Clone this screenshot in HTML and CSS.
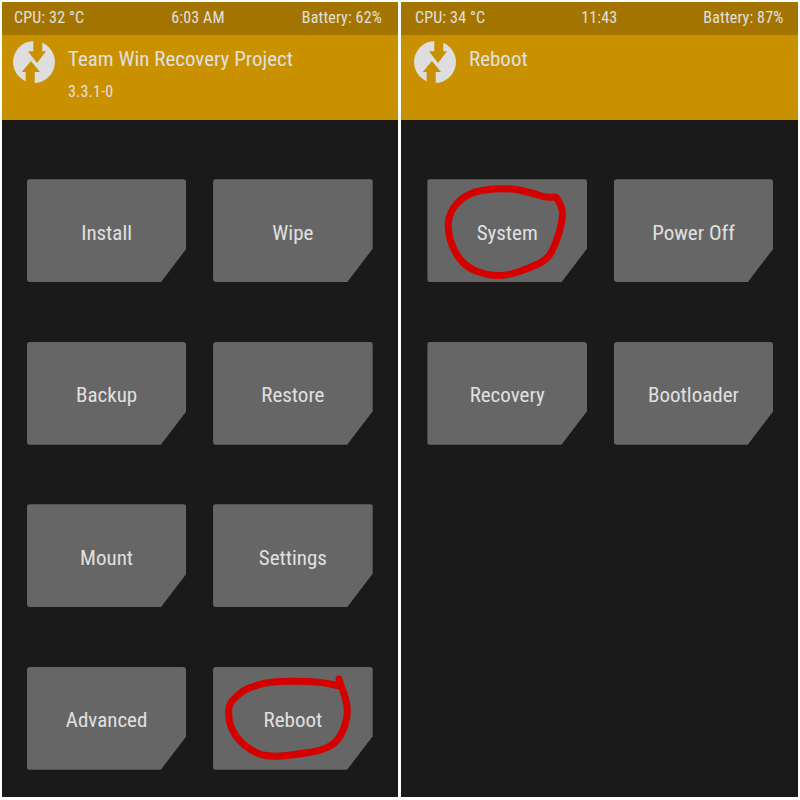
FILE: index.html
```html
<!DOCTYPE html>
<html lang="en">
<head>
    <meta charset="UTF-8">
    <title>TWRP Reboot</title>
    <link rel="stylesheet" href="styles.css">
</head>
<body>
    <div class="screens">
        <section class="screen screen-main">
            <div class="status">
                <span>CPU: 32 °C</span>
                <span>6:03 AM</span>
                <span class="battery">Battery: 62%</span>
            </div>
            <header class="title-bar">
                <svg class="logo" viewBox="0 0 42 42">
                    <circle cx="21" cy="21" r="21" fill="#dedede"/>
                    <path fill="#c99000" d="M20.3 0H29.3V10.3H33L24 22L15 10.3H20.3Z"/>
                    <path fill="#c99000" d="M12.7 42H21.7V31H27L18 20L8.7 31H12.7Z"/>
                </svg>
                <div>
                    <h1>Team Win Recovery Project</h1>
                    <p class="version">3.3.1-0</p>
                </div>
            </header>
            <div class="menu">
                <button class="tile">Install</button>
                <button class="tile">Wipe</button>
                <button class="tile">Backup</button>
                <button class="tile">Restore</button>
                <button class="tile">Mount</button>
                <button class="tile">Settings</button>
                <button class="tile">Advanced</button>
                <button class="tile">
                    Reboot
                    <svg class="scribble" viewBox="0 0 160 103">
                        <path d="M127 18Q110 14 95 13.5Q80 13 67 13.5Q54 14 45 17Q37 19 30 23Q24 27.5 19.5 32.5Q15 37.5 15.8 46.5Q16 56 20 63Q24 71 32 77.5Q40 84 50 87Q60 89 73.5 87.5Q87 86 99 84Q110 82 117 78Q124 74 128 66.5Q132 59 133.5 51Q135 42.5 133.5 35Q132 27.5 129 20Q126 12 126 11"/>
                    </svg>
                </button>
            </div>
        </section>
        <section class="screen screen-reboot">
            <div class="status">
                <span>CPU: 34 °C</span>
                <span>11:43</span>
                <span class="battery">Battery: 87%</span>
            </div>
            <header class="title-bar">
                <svg class="logo" viewBox="0 0 42 42">
                    <circle cx="21" cy="21" r="21" fill="#dedede"/>
                    <path fill="#c99000" d="M20.3 0H29.3V10.3H33L24 22L15 10.3H20.3Z"/>
                    <path fill="#c99000" d="M12.7 42H21.7V31H27L18 20L8.7 31H12.7Z"/>
                </svg>
                <div>
                    <h1>Reboot</h1>
                </div>
            </header>
            <div class="menu">
                <button class="tile">
                    System
                    <svg class="scribble" viewBox="0 0 160 103">
                        <path d="M129 17Q119 18 112.5 15.5Q106 13 94 10.5Q82.5 8 67.5 9Q52.5 10 44 13.5Q36 17 30 23.5Q24 30 22 38.5Q20 47 23 58.5Q26 70 32.5 78.5Q39 87 49 91Q59 95 69 95.5Q79 96 91 92Q102.5 88 112 83.5Q121 79 125 71Q129 63 132 53Q135 43 135.5 35Q136 27 129 17Z"/>
                    </svg>
                </button>
                <button class="tile">Power Off</button>
                <button class="tile">Recovery</button>
                <button class="tile">Bootloader</button>
            </div>
        </section>
    </div>
</body>
</html>
```

FILE: styles.css
```css
body {
    margin: 0;
    background: #fff;
    font-family: 'Roboto', sans-serif;
    color: #e0e0e0;
}
.screens {
    display: grid;
    grid-template-columns: 396px 396.5px;
    gap: 3px;
    height: 795px;
    padding: 2px;
}
.screen {
    background: #1a1a1a;
    display: flex;
    flex-direction: column;
}
.status {
    display: grid;
    grid-template-columns: 1fr auto 1fr;
    align-items: center;
    height: 33px;
    box-sizing: border-box;
    padding: 0 16px 3px 12px;
    background: #a37500;
    font-size: 16px;
    letter-spacing: 0.15px;
    font-stretch: 75%;
}
.battery {
    text-align: right;
}
.screen-reboot .status {
    padding: 0 14px 3px;
}
.title-bar {
    display: flex;
    gap: 13px;
    height: 85px;
    padding: 6px 11px 0;
    box-sizing: border-box;
    background: #c99000;
}
.screen-reboot .title-bar {
    padding: 6px 13px 0;
}
.logo {
    width: 42px;
    height: 42px;
    flex: none;
}
h1 {
    margin: 6px 0 0;
    font-size: 21px;
    font-weight: 400;
    font-stretch: 75%;
}
.version {
    margin: 11px 0 0;
    font-size: 16px;
    letter-spacing: 0.2px;
    font-stretch: 75%;
}
.menu {
    display: grid;
    grid-template-columns: 159.6px 159.6px;
    grid-auto-rows: 103px;
    gap: 59.5px 26.7px;
    padding: 59.2px 24.8px 0;
}
.screen-reboot .menu {
    padding-left: 26.4px;
}
.tile {
    position: relative;
    padding: 4px 0 0;
    border: none;
    border-radius: 3px;
    background: #666;
    color: inherit;
    font: inherit;
    font-size: 21px;
    font-stretch: 75%;
    clip-path: polygon(0 0, 100% 0, 100% 67.5%, 84% 100%, 0 100%);
}
.scribble {
    position: absolute;
    top: 1px;
    left: 0;
    width: 160px;
    height: 103px;
    fill: none;
    stroke: #d40000;
    stroke-width: 7;
    stroke-linecap: round;
    stroke-linejoin: round;
}
```
